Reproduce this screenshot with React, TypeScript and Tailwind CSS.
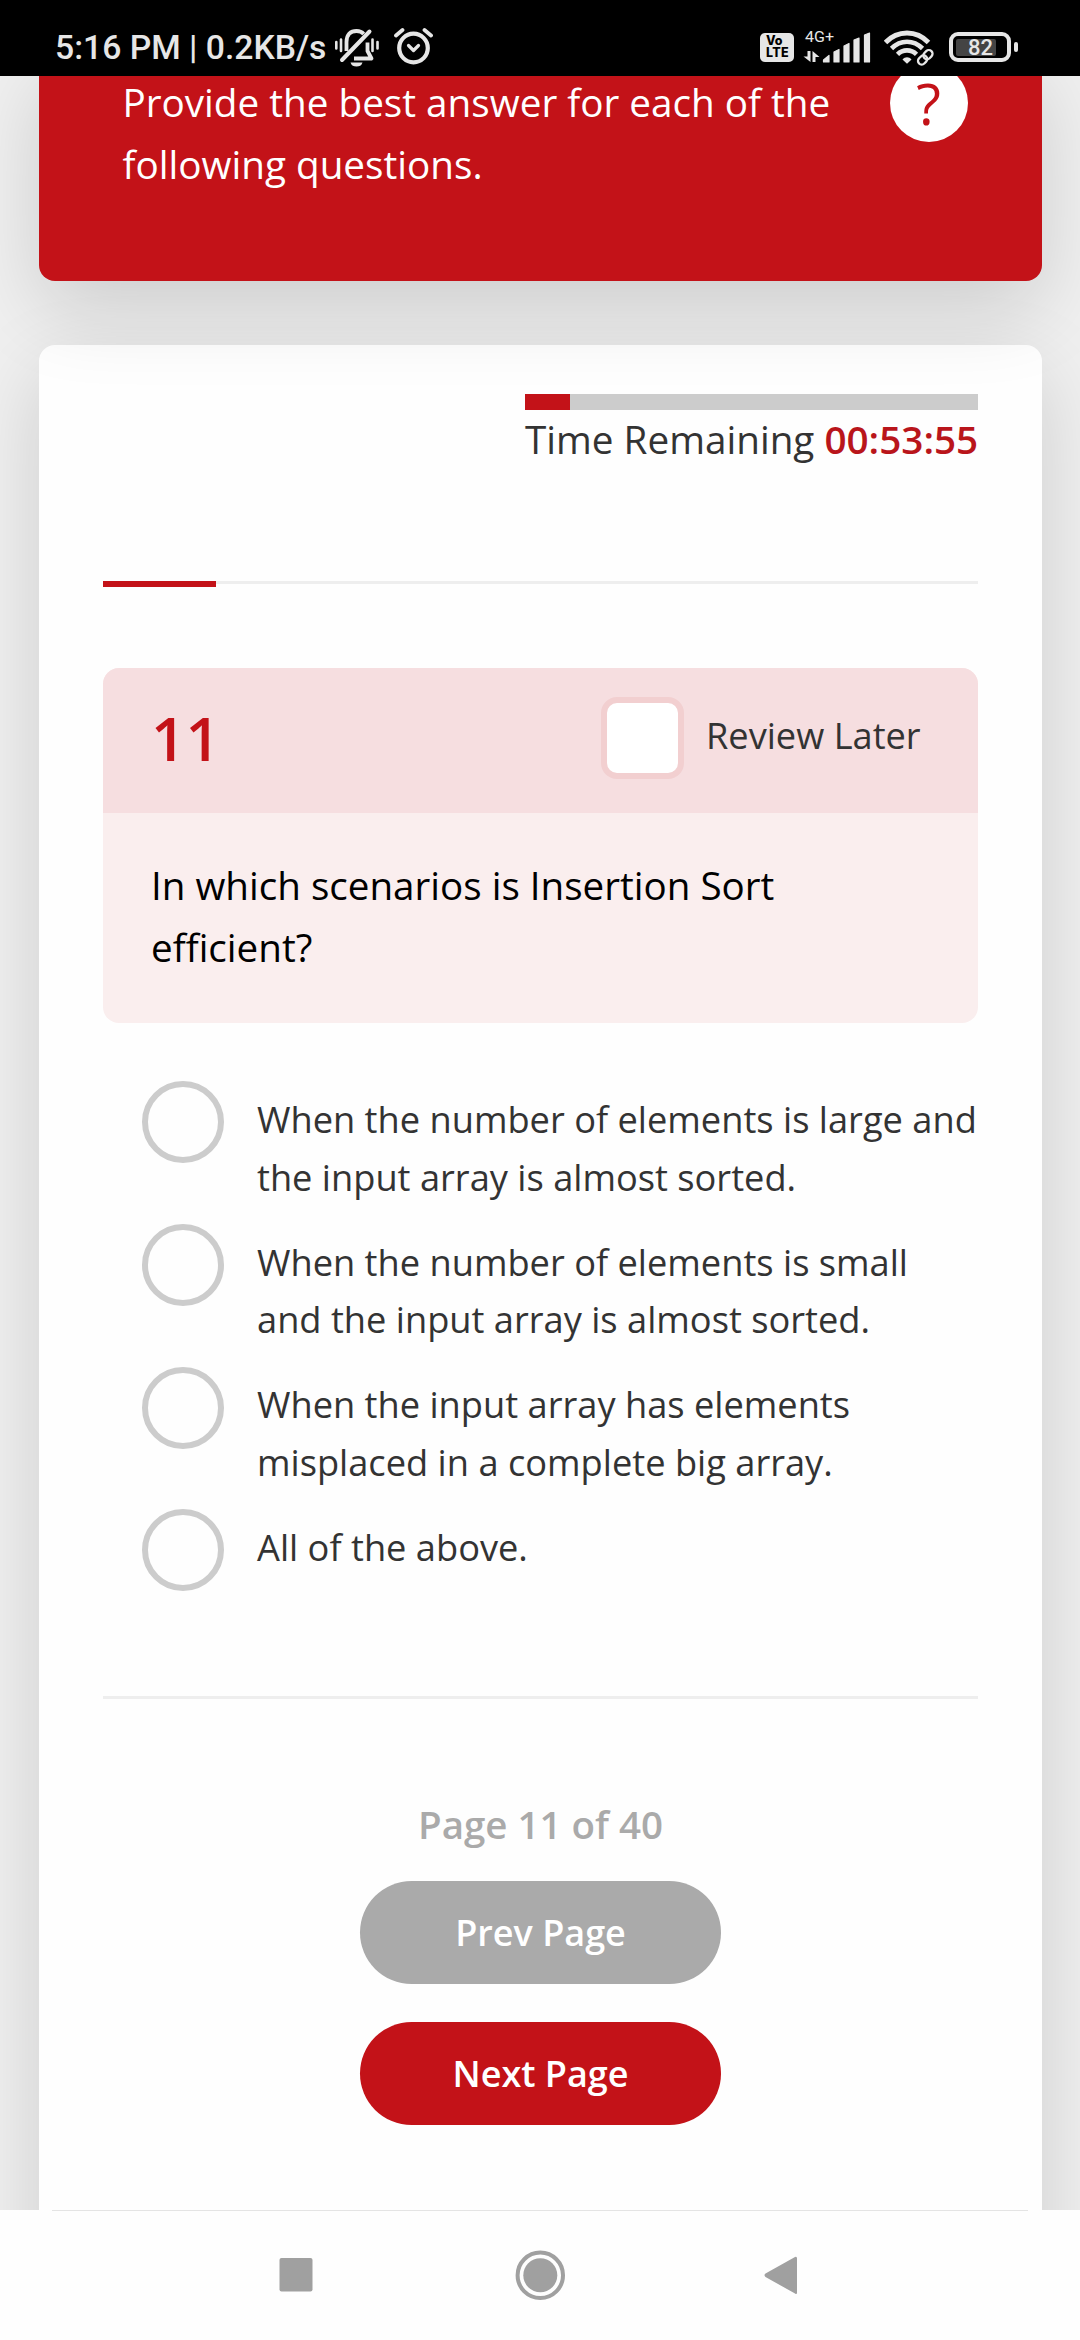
const options = [
  ["When the number of elements is large and", "the input array is almost sorted."],
  ["When the number of elements is small", "and the input array is almost sorted."],
  ["When the input array has elements", "misplaced in a complete big array."],
  ["All of the above."],
];

function SilentIcon() {
  return (
    <svg className="h-[40px] w-[46px]" viewBox="0 0 46 40" fill="none" stroke="#e6e6e6">
      <path d="M12.500 23V14C12.500 6.500 16.500 3 22.500 3C25.500 3 28 4 29.700 6" strokeWidth="3.800" />
      <path d="M33.500 14.500V23L37.500 30.500H20" strokeWidth="3.800" strokeLinejoin="round" />
      <path d="M8 32L35.500 3.500" strokeWidth="4" strokeLinecap="round" />
      <path d="M16.500 34.500H28.500C27.500 37.500 25.500 38.500 22.500 38.500S17.500 37.500 16.500 34.500Z" fill="#e6e6e6" stroke="none" />
      <path d="M2.300 14V20.500M7 11.500V23M38.500 11.500V23M43.500 14V20.500" strokeWidth="2.600" strokeLinecap="round" />
    </svg>
  );
}

function AlarmIcon() {
  return (
    <svg className="h-[38px] w-[40px]" viewBox="0 0 40 38" fill="none" stroke="#e6e6e6" strokeLinecap="round">
      <circle cx="20.500" cy="21" r="14.300" strokeWidth="4.200" />
      <path d="M3 8.500L9.500 3M38 8.500L31.500 3" strokeWidth="3.800" />
      <path d="M15.500 18.500L20.500 23.500L25.500 18.500" strokeWidth="3.200" strokeLinejoin="round" />
    </svg>
  );
}

function SignalIcon() {
  return (
    <svg className="h-[34px] w-[68px]" viewBox="803 30 68 34" fill="#e6e6e6">
      <text x="805" y="42" fontSize="15.500" fontFamily="Roboto" textLength="29" lengthAdjust="spacingAndGlyphs">4G+</text>
      <path d="M807.500 51H810.500V62L803.500 56.500H807.500ZM812.500 51L819.500 57H815.500V62H812.500Z" />
      <path
        d="M823.500 62V60L829 55.500V62ZM834 62V52L839 49.500V62ZM844 62V46L849 43.500V62ZM854 62V40L859 38V62ZM864.500 62V35L869.500 33V62Z"
        stroke="#e6e6e6"
        strokeWidth="1.200"
        strokeLinejoin="round"
      />
    </svg>
  );
}

function WifiIcon() {
  return (
    <svg className="h-[36px] w-[50px]" viewBox="884 30 50 36" fill="none" stroke="#e6e6e6">
      <path d="M885.500 42.500C897.500 29.800 916.500 29.800 928.500 42.500" strokeWidth="4.800" />
      <path d="M891.500 48.500C900.500 39.500 913.500 39.500 922.500 48.500" strokeWidth="4.600" />
      <path d="M897.500 54.300C903 49 911 49 916.500 54.300" strokeWidth="4.600" />
      <path d="M902.500 59.500C905 56.500 909 56.500 911.500 59.500L907 63.800Z" fill="#e6e6e6" stroke="none" />
      <g strokeWidth="2.300" transform="rotate(-45 925.300 57.300)">
        <rect x="917" y="53.600" width="17" height="7.400" rx="3.700" stroke="#000" strokeWidth="6" />
        <rect x="916.500" y="53.600" width="10" height="7.400" rx="3.700" />
        <rect x="924" y="53.600" width="10" height="7.400" rx="3.700" />
      </g>
    </svg>
  );
}

function StatusBar() {
  return (
    <header className="flex h-[76px] shrink-0 items-start bg-black text-[#e6e6e6]">
      <div className="ml-[55px] mt-[28px] w-[272px] whitespace-nowrap font-[Roboto] text-[33.700px] font-medium leading-[40px]">
        5:16 PM | 0.2KB/s
      </div>
      <div className="ml-[7px] mt-[28px]"><SilentIcon /></div>
      <div className="ml-[13px] mt-[27px]"><AlarmIcon /></div>
      <div className="ml-[327px] mt-[33px] flex h-[29px] w-[34px] flex-col rounded-[5px] bg-[#e6e6e6] pl-[6px] pt-[2px] font-[Inter] text-[12.500px] font-extrabold leading-[12px] text-black">
        <span>Vo</span>
        <span className="tracking-[0.3px]">LTE</span>
      </div>
      <div className="ml-[9px] mt-[30px]"><SignalIcon /></div>
      <div className="ml-[13px] mt-[30px]"><WifiIcon /></div>
      <div className="ml-[15px] mt-[32px] flex items-center gap-[3px]">
        <div className="flex h-[30px] w-[62px] items-center rounded-[9px] border-4 border-[#e6e6e6] pl-[3px]">
          <div className="flex h-[17px] w-[40px] items-center justify-end rounded-[2px] bg-[#444] pr-[3px] pt-[2px]">
            <span className="font-[Roboto] text-[22px] font-medium leading-none">82</span>
          </div>
        </div>
        <div className="h-[10px] w-[4px] rounded-[2px] bg-[#e6e6e6]" />
      </div>
    </header>
  );
}

function NavBar() {
  return (
    <nav className="flex h-[130px] shrink-0 flex-col items-center bg-[#fefefe]">
      <div className="h-px w-[976px] bg-[#e4e4e4]" />
      <svg className="mt-[34px] h-[60px] w-[1080px]" viewBox="0 2245 1080 60" fill="#a0a0a0">
        <rect x="279.500" y="2258" width="33" height="33.500" rx="2" />
        <circle cx="540.300" cy="2275.300" r="22.700" fill="none" stroke="#a0a0a0" strokeWidth="4" />
        <circle cx="540.300" cy="2275.300" r="17" />
        <path d="M797 2258.500V2292.500Q797 2295 795 2293.500L765.500 2277Q763.500 2275.300 765.500 2273.600L795 2257Q797 2256 797 2258.500Z" />
      </svg>
    </nav>
  );
}

export default function App() {
  return (
    <div className="flex h-[2340px] w-[1080px] flex-col overflow-hidden bg-[#f0f0f0] font-['Open_Sans',sans-serif] text-[#333]">
      <StatusBar />
      <main className="flex min-h-0 flex-1 flex-col overflow-hidden pl-[39px] pr-[38px]">
        <section className="relative z-10 -mt-[20px] flex h-[225px] shrink-0 items-start rounded-[16px] bg-[#c31218] pl-[83.500px] shadow-[0_27px_82px_rgba(0,0,0,0.15)]">
          <p className="mt-[16px] w-[767px] whitespace-nowrap text-[38.660px] leading-[61.600px] text-white">
            Provide the best answer for each of the
            <br />
            following questions.
          </p>
          <div className="mt-[8px] flex size-[78px] items-center justify-center rounded-full bg-white text-[57px] leading-none text-[#c31218]">
            ?
          </div>
        </section>

        <section className="mt-[64px] h-[2000px] shrink-0 rounded-[16px] bg-[#fefefe] px-[64px] pt-[49px] shadow-[0_27px_82px_rgba(0,0,0,0.15)]">
          <div className="ml-auto w-[453px]">
            <div className="h-[16px] bg-[#ccc]">
              <div className="h-full w-[45px] bg-[#c31218]" />
            </div>
            <p className="-mt-px whitespace-nowrap text-[38.660px] leading-[61.600px]">
              Time Remaining <span className="font-semibold text-[#b9151b]">00:53:55</span>
            </p>
          </div>

          <div className="mt-[110.400px] h-[6px]">
            <div className="h-[3px] bg-[#eee]">
              <div className="h-[6px] w-[113px] bg-[#c31218]" />
            </div>
          </div>

          <div className="mt-[81px] h-[355px] overflow-hidden rounded-[16px] bg-[#faeeee]">
            <div className="flex h-[145px] items-start bg-[#f6dee0] pl-[48px]">
              <span className="mt-[29px] w-[450px] text-[60.500px] font-semibold leading-[82px] text-[#c31218]">11</span>
              <span className="mt-[29px] h-[82px] w-[83px] rounded-[16px] border-6 border-[#f2cfd0] bg-white" />
              <span className="ml-[22px] mt-[39px] whitespace-nowrap text-[36.200px] leading-[57.750px]">Review Later</span>
            </div>
            <p className="pl-[48px] pt-[42px] text-[38.600px] leading-[61.750px] text-black">
              In which scenarios is Insertion Sort
              <br />
              efficient?
            </p>
          </div>

          <ul className="mt-[58.300px] pl-[39px]">
            {options.map((lines) => (
              <li key={lines[0]} className="flex h-[142.700px] items-start">
                <span className="size-[82px] shrink-0 rounded-full border-6 border-[#ccc]" />
                <p className="ml-[33px] mt-[9.700px] whitespace-nowrap text-[36.220px] leading-[57.750px]">
                  {lines.map((line) => (
                    <span key={line} className="block">{line}</span>
                  ))}
                </p>
              </li>
            ))}
          </ul>

          <div className="mt-[43.900px] h-[3px] bg-[#eee]" />

          <div className="mt-[95px] flex flex-col items-center font-semibold">
            <p className="text-[38.500px] leading-[61.600px] text-[#aaa]">Page 11 of 40</p>
            <button className="mt-[25.400px] h-[103px] w-[361px] rounded-full bg-[#aaa] text-[36px] leading-[57.750px] text-white">Prev Page</button>
            <button className="mt-[38px] h-[103px] w-[361px] rounded-full bg-[#c31218] text-[36px] leading-[57.750px] text-white">Next Page</button>
          </div>
        </section>
      </main>
      <NavBar />
    </div>
  );
}
